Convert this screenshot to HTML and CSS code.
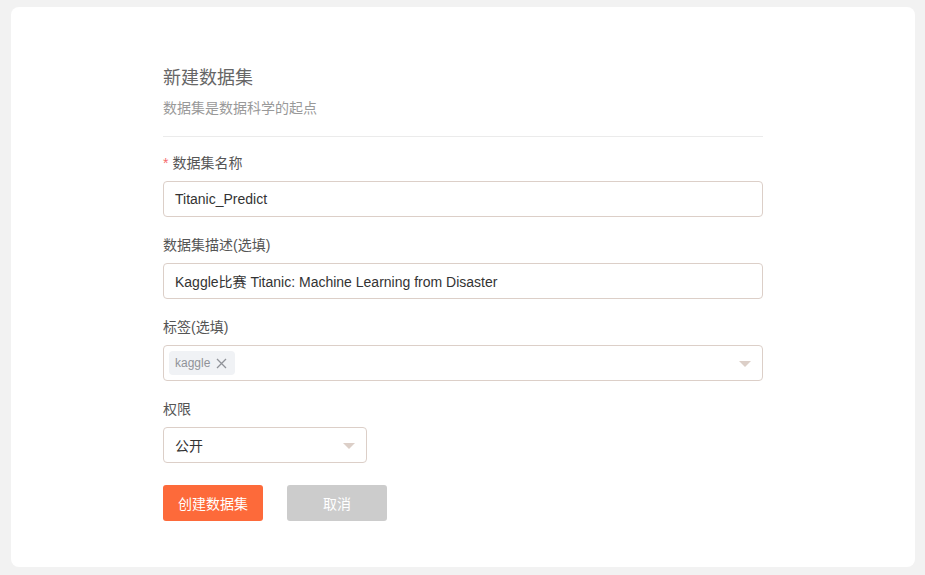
FILE: index.html
```html
<!DOCTYPE html>
<html lang="zh-CN">
<head>
<meta charset="utf-8">
<title>新建数据集</title>
<link rel="stylesheet" href="styles.css">
</head>
<body>
<div class="card">
  <div class="form-wrap">
    <div class="header">
      <h1 class="title">新建数据集</h1>
      <p class="subtitle">数据集是数据科学的起点</p>
    </div>
    <div class="field">
      <label class="label"><span class="req">*</span>数据集名称</label>
      <div class="input">Titanic_Predict</div>
    </div>
    <div class="field">
      <label class="label">数据集描述(选填)</label>
      <div class="input">Kaggle比赛 Titanic: Machine Learning from Disaster</div>
    </div>
    <div class="field">
      <label class="label">标签(选填)</label>
      <div class="input select tags">
        <span class="tag">kaggle<svg class="tag-close" width="11" height="11" viewBox="0 0 11 11"><path d="M1 1L10 10M10 1L1 10" stroke="#909399" stroke-width="1.3" fill="none"/></svg></span>
        <span class="arrow"></span>
      </div>
    </div>
    <div class="field">
      <label class="label">权限</label>
      <div class="input select narrow">公开<span class="arrow"></span></div>
    </div>
    <div class="actions">
      <button class="btn primary">创建数据集</button>
      <button class="btn cancel">取消</button>
    </div>
  </div>
</div>
</body>
</html>
```
FILE: styles.css
```css
html, body {
  margin: 0;
  padding: 0;
}
body {
  background: #f2f2f2;
  font-family: "Liberation Sans", "Noto Sans CJK SC", sans-serif;
  padding: 7px 10px 8px 11px;
  box-sizing: border-box;
  height: 575px;
}
.card {
  background: #fff;
  border-radius: 8px;
  height: 560px;
  box-sizing: border-box;
  padding-top: 59px;
}
.form-wrap {
  width: 600px;
  margin: 0 auto;
}
.header {
  border-bottom: 1px solid #ebebeb;
  padding-bottom: 18px;
  margin-bottom: 16px;
}
.title {
  margin: 0;
  font-size: 18px;
  line-height: 24px;
  font-weight: normal;
  color: #666;
}
.subtitle {
  margin: 8px 0 0;
  font-size: 14px;
  line-height: 20px;
  color: #999;
}
.field {
  margin-bottom: 18px;
}
.label {
  display: block;
  font-size: 14px;
  line-height: 20px;
  color: #555;
  margin-bottom: 8px;
}
.req {
  color: #f56c6c;
  margin-right: 4px;
}
.input {
  height: 36px;
  box-sizing: border-box;
  border: 1px solid #dccfc8;
  border-radius: 4px;
  padding: 0 11px;
  display: flex;
  align-items: center;
  font-size: 14px;
  color: #333;
}
.select {
  position: relative;
}
.narrow {
  width: 204px;
}
.tags {
  padding-left: 5px;
}
.tag {
  display: inline-flex;
  align-items: center;
  height: 24px;
  padding: 0 8px 0 6px;
  background: #f0f2f5;
  border-radius: 4px;
  color: #909399;
  font-size: 12px;
}
.tag-close {
  margin-left: 6px;
}
.arrow {
  position: absolute;
  right: 11px;
  top: 15px;
  width: 0;
  height: 0;
  border-left: 6px solid transparent;
  border-right: 6px solid transparent;
  border-top: 6px solid #dccfc8;
}
.actions {
  display: flex;
  gap: 24px;
  padding-top: 4px;
}
.btn {
  width: 100px;
  height: 36px;
  border: none;
  border-radius: 3px;
  color: #fff;
  font-size: 14px;
  font-family: inherit;
  padding: 0;
}
.primary {
  background: #fd6a3a;
}
.cancel {
  background: #cccccc;
}
```
